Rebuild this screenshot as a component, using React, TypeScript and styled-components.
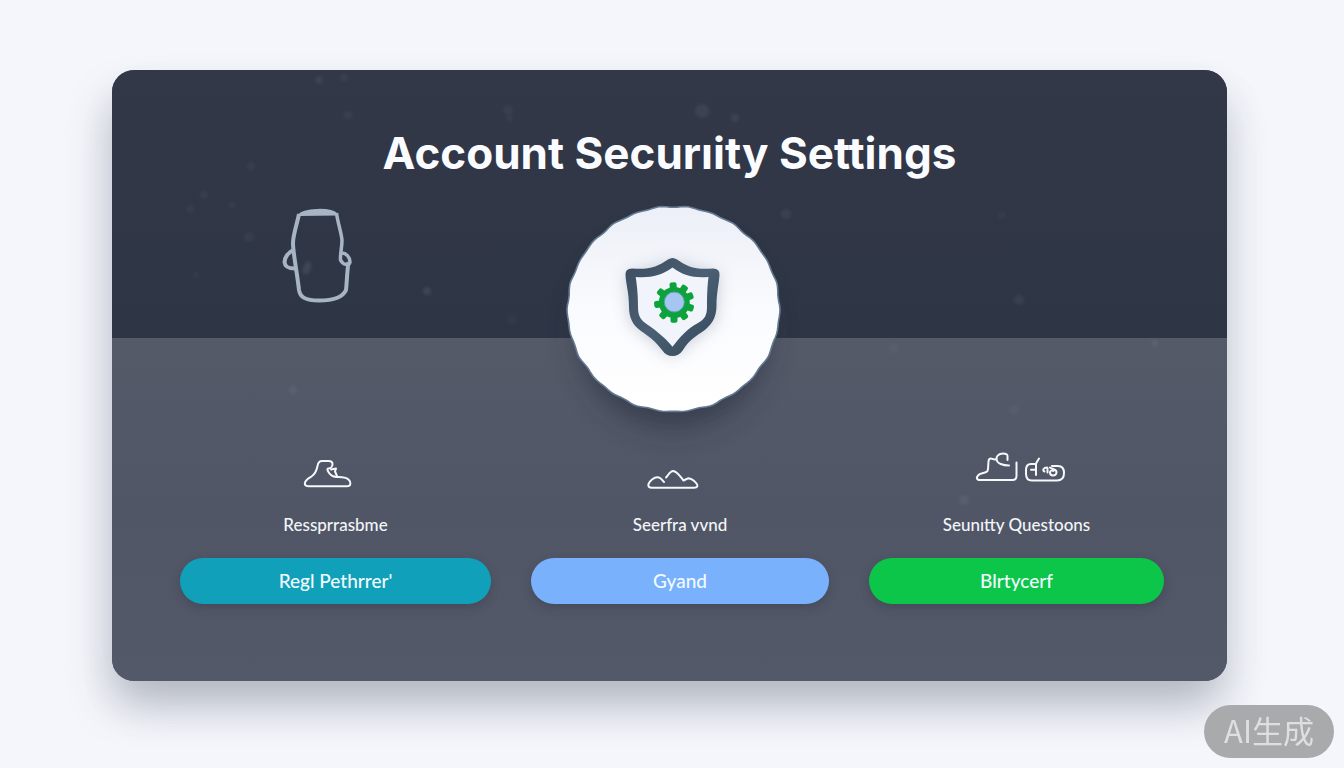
import React from "react";
import styled, { createGlobalStyle } from "styled-components";

const GlobalStyle = createGlobalStyle`
  * { box-sizing: border-box; }
  body {
    margin: 0;
    background: #f4f6fb;
    font-family: Lato, "Liberation Sans", sans-serif;
  }
`;

const Page = styled.div`
  min-height: 100vh;
  padding: 70px 117px 86px 112px;
`;

const Card = styled.main`
  position: relative;
  border-radius: 22px;
  background: #525868;
  box-shadow: -6px 26px 44px -4px rgba(52, 60, 80, 0.26), 6px 26px 44px -4px rgba(52, 60, 80, 0.12);
`;

const Header = styled.header`
  padding: 55px 28px 32px;
  border-radius: 22px 22px 0 0;
  background: linear-gradient(#323848, #2e3545);
`;

const Title = styled.h1`
  margin: 0 0 24px;
  color: #fbfcff;
  font-family: Inter, "Liberation Sans", sans-serif;
  font-size: 44px;
  font-weight: 700;
  line-height: 56px;
  text-align: center;
`;

const Jar = styled.svg`
  display: block;
  width: 80px;
  height: 101px;
  margin-left: 13%;
`;

const Specks = styled.svg`
  position: absolute;
  inset: 0;
  width: 100%;
  height: 100%;
  pointer-events: none;
`;

const Badge = styled.svg`
  position: absolute;
  top: 80px;
  left: 50%;
  width: 312px;
  height: 312px;
  transform: translateX(-50%);
`;

const Options = styled.section`
  display: grid;
  grid-template-columns: 311fr 298fr 295fr;
  gap: 40px;
  padding: 106px 63px 77px 68px;
  border-radius: 0 0 22px 22px;
  background: linear-gradient(#555a69, #505666 50%, #535968);
`;

const Option = styled.div`
  display: flex;
  flex-direction: column;
  align-items: center;
  gap: 21px;
`;

const OptionIcon = styled.svg`
  width: 112px;
  height: 48px;
  fill: none;
  stroke: #f6f8fc;
  stroke-width: 2;
  stroke-linecap: round;
  stroke-linejoin: round;
`;

const OptionLabel = styled.h2`
  margin: 0;
  color: #f3f5f9;
  font-size: 17px;
  font-weight: 500;
  line-height: 24px;
`;

const ActionButton = styled.button<{ $color: string }>`
  width: 100%;
  height: 46px;
  padding: 0;
  border: 0;
  border-radius: 23px;
  background: ${(p) => p.$color};
  box-shadow: 0 4px 10px rgba(40, 46, 60, 0.3);
  color: #f1fbff;
  font-family: inherit;
  font-size: 19px;
  font-weight: 500;
  line-height: 24px;
  cursor: pointer;
`;

const Watermark = styled.aside`
  position: fixed;
  right: 10px;
  bottom: 10px;
  padding: 3px 20px 6px;
  border-radius: 27px;
  background: #a9aaac;
  color: #dedfe1;
  font-family: "Noto Sans CJK SC", sans-serif;
  font-size: 31px;
  line-height: 44px;
`;

const specks = [
  [207, 10, 4, 0.08], [232, 8, 4, 0.05], [236, 45, 4, 0.06], [396, 40, 5, 0.05],
  [398, 48, 3, 0.06], [590, 41, 7, 0.08], [623, 48, 4, 0.08], [120, 135, 3, 0.05],
  [78, 139, 4, 0.05], [92, 125, 4, 0.05], [139, 96, 4, 0.05], [674, 144, 5, 0.07],
  [315, 221, 4, 0.11], [137, 167, 5, 0.05], [907, 230, 5, 0.07],
  [890, 145, 4, 0.04], [1043, 273, 3, 0.09], [181, 320, 4, 0.07], [852, 430, 5, 0.07],
  [902, 340, 5, 0.04], [782, 278, 5, 0.04], [400, 250, 4, 0.04], [84, 205, 3, 0.04],
];

const gearTeeth = [-94, -55, -22, 18, 54, 91, 131, 174, 217];

const badgeEdge = Array.from({ length: 180 }, (_, i) => {
  const a = (i / 180) * Math.PI * 2;
  const wobble = 0.5 * Math.cos(a * 26) + 0.3 * Math.sin(a * 17);
  const x = 673.5 + (106 + wobble) * Math.cos(a);
  const y = 309 + (102.5 + wobble) * Math.sin(a);
  return `${i ? "L" : "M"}${x.toFixed(1)} ${y.toFixed(1)}`;
}).join("") + "Z";

const SecurityBadge = () => (
  <Badge viewBox="514 150 312 312" aria-hidden="true">
    <defs>
      <linearGradient id="plate" x1="0" y1="0" x2="0" y2="1">
        <stop offset="0" stopColor="#eceff7" />
        <stop offset="0.5" stopColor="#fafbfe" />
        <stop offset="1" stopColor="#ffffff" />
      </linearGradient>
      <linearGradient id="rim" x1="0" y1="0" x2="1" y2="1">
        <stop offset="0" stopColor="#3c4c60" />
        <stop offset="0.5" stopColor="#4b6074" />
        <stop offset="1" stopColor="#34465a" />
      </linearGradient>
      <filter id="plateShadow" x="-30%" y="-30%" width="160%" height="160%">
        <feGaussianBlur stdDeviation="14" />
      </filter>
      <filter id="shieldShadow" x="-40%" y="-40%" width="180%" height="180%">
        <feGaussianBlur stdDeviation="8" />
      </filter>
    </defs>
    <ellipse cx="673" cy="332" rx="96" ry="96" fill="#262d3c" opacity="0.6" filter="url(#plateShadow)" />
    <path d={badgeEdge} fill="url(#plate)" stroke="#647a92" strokeWidth="1.6" />
    <path d="M626 274L672 262L719 274L716 322L672 358L630 322Z" fill="#8d97aa" opacity="0.45" filter="url(#shieldShadow)" />
    <path
      d="M668 259.5Q672.5 256.5 677 259.5C687 266.5 695 270 713 268.5Q720 268.500 719.500 275C719 284 716.500 292 716.500 306C716.500 318 711 326 702 332C692 338.500 688 342 683 350Q679 356 672.500 356Q666 356 662 350C656 342 650 337 641 331C633 325.500 629 318 629 307C629 292 626 285 625.500 275Q625 268.500 632 268.500C649 270 658 266.500 668 259.500Z"
      fill="url(#rim)"
    />
    <path
      d="M672.500 267.500C684 276 693 278 708.500 277C707.500 285 707 293 707 307C707 315 705 319 698 323C687 329 680 337 672.500 346.700C665 338 658 332 648 325C640 320 638 315 638 307C638 294 637 286 635.700 277C650 278 661 276 672.500 267.500Z"
      fill="#f1f4fb"
    />
    <g fill="#0ca33c">
      <circle cx="674.300" cy="302.500" r="15.500" />
      {gearTeeth.map((a) => (
        <rect key={a} x="686" y="299" width="8.500" height="7" rx="2" transform={`rotate(${a} 674.3 302.5)`} />
      ))}
    </g>
    <circle cx="674.300" cy="302" r="10" fill="#a6c6f2" stroke="#5f9fb8" strokeWidth="1" />
  </Badge>
);

const PersonIcon = () => (
  <OptionIcon viewBox="280 444 112 48" aria-hidden="true">
    <path d="M309 486.300H347C351 486.300 351.500 482 348.500 479.500C345 476.500 341 477 336.500 477C333 477 331.500 476 329.500 473.500C327.500 471 326.500 468.500 328.500 468.500C331 468.500 332.500 466 332.500 464C332.500 462 330.500 461 328.500 461H322C319 461 318 463 317.500 466C316.500 471 314.500 474.500 311.500 476.500C308 478.500 305 480 304.800 483.500C304.800 485.500 306.500 486.300 309 486.300Z" />
    <path d="M331 469.500L336 468.500L335 471.500L337 476" />
  </OptionIcon>
);

const HillsIcon = () => (
  <OptionIcon viewBox="624 444 112 48" aria-hidden="true">
    <path d="M664 482C662 480 661 477.500 658 477.300C654 477 650 480.500 648.500 484C647.800 486.500 649 487.700 652 487.700H694C697.500 487.700 698.500 486 696.500 483.500C694 480.500 691 478.500 688 478.300L683.500 480.500C680.500 477 677.500 471.500 673 471C670.500 471 668.500 474.500 666 477.500" />
  </OptionIcon>
);

const QuestionsIcon = () => (
  <OptionIcon viewBox="961 444 112 48" aria-hidden="true">
    <path d="M1016.500 462.500V476C1016.500 479 1015.500 480 1012.500 480H980C976.500 480 976 477.500 978.500 475C981 472.500 986 473.500 987.500 471C989 467 987.500 462.500 989 459.500C990.500 456.500 993.500 461 996.500 459" />
    <path d="M1007.500 460V456C1007.500 453.500 1005.500 453.500 1003 453.500C998.500 453.500 996 456.500 996.500 459.500C997 463.500 1003 465.500 1009 465.500" />
    <path d="M1034.500 464H1031C1027 464 1026 467 1026 470V474C1026 479 1028.500 480.500 1032 480.500H1057C1061.500 480.500 1064 477.500 1064 473C1064 468 1062 466 1058 466H1052" />
    <path d="M1039 458.500L1036 463.500V475M1031 469.800H1035.500" />
    <path d="M1047 467.500C1043.500 467.500 1042 470.500 1044.500 471.500M1047.500 468V472.500" />
    <path d="M1050 467.500C1053 470 1057 468.500 1056.500 472.500C1056 476.500 1050 476.500 1050 472.500C1050 470.500 1052 470 1053.500 471" />
  </OptionIcon>
);

const options = [
  { label: "Ressprrasbme", action: "Regl Pethrrer'", color: "#11a0ba", Icon: PersonIcon },
  { label: "Seerfra vvnd", action: "Gyand", color: "#79b1fc", Icon: HillsIcon },
  { label: "Seunıtty Questoons", action: "Blrtycerf", color: "#0bc649", Icon: QuestionsIcon },
];

export default function App() {
  return (
    <>
      <GlobalStyle />
      <Page>
        <Card>
          <Header>
            <Title>Account Securıity Settings</Title>
            <Jar viewBox="278 205 80 101" fill="none" stroke="#a7b4c4" strokeWidth="4" strokeLinejoin="round" aria-hidden="true">
              <path d="M299 214C297 224 293 235 293 243C293 253 297 272 299 290C300 297 305 300.500 319 300.500C334 300.500 343 297 346 290C347 281 347 272 348.500 262" />
              <path d="M336.500 213C338 224 341 231 342 240C342 248 340 254 340.500 260C343 265 349 266 350 262C350 257 346 253 342 253" strokeWidth="3.500" />
              <path d="M294 250C288 252 284.500 258 284.500 262C285 267 288 268.500 295 268.500" />
              <path d="M299 215C303 209 331 207.500 337 214.500Z" fill="#a7b4c4" strokeWidth="2" />
            </Jar>
          </Header>
          <Options>
            {options.map(({ label, action, color, Icon }) => (
              <Option key={label}>
                <Icon />
                <OptionLabel>{label}</OptionLabel>
                <ActionButton type="button" $color={color}>{action}</ActionButton>
              </Option>
            ))}
          </Options>
          <Specks viewBox="0 0 1115 611" preserveAspectRatio="none" aria-hidden="true">
            <defs>
              <filter id="soft" x="-50%" y="-50%" width="200%" height="200%">
                <feGaussianBlur stdDeviation="1.500" />
              </filter>
            </defs>
            {specks.map(([x, y, r, o]) => (
              <circle key={`${x}-${y}`} cx={x} cy={y} r={r} fill="#b9c4d8" opacity={o} filter="url(#soft)" />
            ))}
            <ellipse cx="195" cy="198" rx="4" ry="7" fill="#b9c4d8" opacity="0.11" filter="url(#soft)" transform="rotate(20 195 198)" />
          </Specks>
          <SecurityBadge />
        </Card>
      </Page>
      <Watermark>AI生成</Watermark>
    </>
  );
}
